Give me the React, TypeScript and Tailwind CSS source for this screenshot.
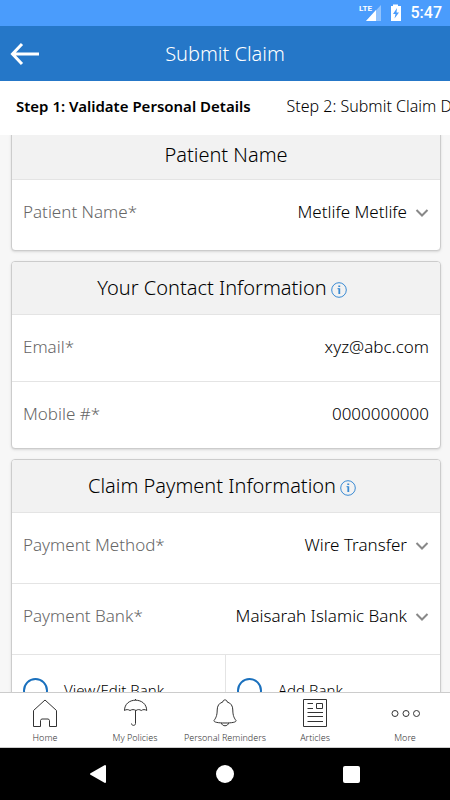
import React, { useState } from 'react';

const navItems = [
  { label: 'Home', icon: <HomeIcon /> },
  { label: 'My Policies', icon: <UmbrellaIcon /> },
  { label: 'Personal Reminders', icon: <BellIcon /> },
  { label: 'Articles', icon: <ArticleIcon /> },
  { label: 'More', icon: <MoreIcon /> },
];

function HomeIcon() {
  return (
    <svg width="30" height="30" viewBox="0 0 30 30" fill="none" stroke="#333" strokeWidth="1">
      <path d="M3.5 28.5V12.5L15 2L26.5 12.5V28.5H19.5V22.5L18.5 21H11.5L10.5 22.5V28.5Z" />
    </svg>
  );
}

function UmbrellaIcon() {
  return (
    <svg width="30" height="30" viewBox="0 0 30 30" fill="none" stroke="#333" strokeWidth="1">
      <path d="M4.5 12.5C4.5 6 9.5 2.2 15.5 2.2S26.700 6 26.700 12.500C25 11.300 23 11.300 21.300 12.500C19.500 11.300 17.700 11.300 16 12.500C14 11.300 12 11.300 10 12.500C8.200 11.300 6.200 11.300 4.500 12.500Z" />
      <path d="M15.500 1V2.200M15.500 12.500V25.500C15.500 28 11.500 28 11.500 25.500" />
    </svg>
  );
}

function BellIcon() {
  return (
    <svg width="30" height="30" viewBox="0 0 30 30" fill="none" stroke="#333" strokeWidth="1">
      <path d="M12.800 4C12.800 1.200 17.200 1.200 17.200 4C21 5 22.800 8 22.800 12C22.800 18 24.500 20.500 26 22.500C26.500 24 23 25 15 25S3.500 24 4 22.500C5.500 20.500 7.200 18 7.200 12C7.200 8 9 5 12.800 4Z" />
      <path d="M11.500 25C12 28.700 18 28.700 18.500 25" />
    </svg>
  );
}

function ArticleIcon() {
  return (
    <svg width="30" height="30" viewBox="0 0 30 30" fill="none" stroke="#333" strokeWidth="1">
      <path d="M3.500 1.500H26.500V28.500H3.500Z" />
      <path d="M16.500 5.500H22.500V10.500H16.500ZM7.500 5.500H13M7.500 10.500H13M7.500 14.500H23M7.500 18.500H23M7.500 23.500H23" />
    </svg>
  );
}

function MoreIcon() {
  return (
    <svg width="30" height="30" viewBox="0 0 30 30" fill="none" stroke="#333" strokeWidth="1">
      <circle cx="5" cy="15.500" r="3" />
      <circle cx="16" cy="15.500" r="3" />
      <circle cx="26.500" cy="15.500" r="3" />
    </svg>
  );
}

function InfoButton({ label }: { label: string }) {
  return (
    <button type="button" aria-label={label} className="mt-1">
      <svg width="16" height="16" viewBox="0 0 16 16" fill="none" stroke="#3a8ad3">
        <circle cx="8" cy="8" r="7.300" />
        <path d="M8.300 6.200V12" strokeWidth="1.800" />
        <path d="M6.500 6.700H8" />
        <path d="M7.300 3.500H9.200V5H7.300Z" fill="#3a8ad3" stroke="none" />
      </svg>
    </button>
  );
}

function Card({ title, info, children }: { title: string; info?: boolean; children: React.ReactNode }) {
  return (
    <section className="overflow-hidden rounded border border-[#ccc] bg-white shadow-sm">
      <div className={`box-content flex items-center justify-center gap-1 border-b border-[#e4e4e4] bg-[#f2f2f2] ${info ? 'h-[52px] pr-2' : 'h-12'
        }`}>
        <h2 className="text-xl font-[350]">{title}</h2>
        {info && <InfoButton label={`About ${title}`} />}
      </div>
      <div className="divide-y divide-[#e4e4e4]">{children}</div>
    </section>
  );
}

function SelectRow({ id, label, value }: { id: string; label: string; value: string }) {
  return (
    <div className="box-content flex h-[70px] items-center px-[11px]">
      <label htmlFor={id} className="shrink-0 pb-1.5 text-[#666]">{label}</label>
      <select id={id} className="min-w-0 flex-1 appearance-none bg-transparent pr-2 pb-1.5 text-right text-black">
        <option>{value}</option>
      </select>
      <svg width="14" height="14" viewBox="0 0 14 14" fill="none" stroke="#888" strokeWidth="2">
        <path d="M1.500 2L7 7.500L12.500 2" />
      </svg>
    </div>
  );
}

function InputRow({ id, label, type, value }: { id: string; label: string; type: string; value: string }) {
  return (
    <div className="box-content flex h-[66px] items-center px-[11px]">
      <label htmlFor={id} className="shrink-0 pb-0.5 text-[#666]">{label}</label>
      <input id={id} type={type} defaultValue={value} className="min-w-0 flex-1 bg-transparent pb-0.5 text-right text-black" />
    </div>
  );
}

export default function App() {
  const [bank, setBank] = useState('');

  return (
    <div className="flex h-screen flex-col overflow-hidden bg-[#f7f7f7] font-['Noto_Sans',sans-serif] text-[17px] font-light text-black">
      {/* Status bar */}
      <div className="flex h-[26px] shrink-0 items-center justify-end bg-[#4a9cfc] pr-2 text-white">
        <svg width="44" height="20" viewBox="0 0 44 20" fill="#fff" className="mr-2">
          <text x="0" y="8" fontSize="8" fontWeight="700" fontFamily="Roboto, sans-serif">LTE</text>
          <path d="M22 2V18H7Z" opacity="0.400" />
          <path d="M17 7V18H7Z" />
          <path d="M34 3V1.500H39V3H42V18H32V3Z" />
          <path d="M38 5L34 11H36.500L35.500 15.500L40 9.500H37.500Z" fill="#4a9cfc" />
        </svg>
        <span className="font-['Roboto',sans-serif] text-base font-medium">5:47</span>
      </div>

      {/* Header */}
      <header className="grid h-[55px] shrink-0 grid-cols-[1fr_auto_1fr] items-center bg-[#2577c8] px-[10px] text-white">
        <button type="button" aria-label="Back" className="justify-self-start">
          <svg width="30" height="24" viewBox="0 0 30 24" fill="none" stroke="#fff" strokeWidth="3">
            <path d="M12 2L2.500 12L12 22M2.500 12H29" />
          </svg>
        </button>
        <h1 className="text-xl font-[350]">Submit Claim</h1>
      </header>

      {/* Steps */}
      <nav className="flex h-[54px] shrink-0 items-center gap-9 overflow-hidden bg-white px-4 pb-1 whitespace-nowrap">
        <a href="#step-1" aria-current="step" className="text-[15px] font-semibold">Step 1: Validate Personal Details</a>
        <a href="#step-2" className="text-base">Step 2: Submit Claim Details</a>
      </nav>

      {/* Form */}
      <main className="min-h-0 flex-1 overflow-hidden pr-[9px] pl-[11px]">
        <form className="-mt-[5px] flex flex-col gap-2.5">
          <Card title="Patient Name">
            <SelectRow id="patient" label="Patient Name*" value="Metlife Metlife" />
          </Card>
          <Card title="Your Contact Information" info>
            <InputRow id="email" label="Email*" type="email" value="xyz@abc.com" />
            <InputRow id="mobile" label="Mobile #*" type="tel" value="0000000000" />
          </Card>
          <Card title="Claim Payment Information" info>
            <SelectRow id="method" label="Payment Method*" value="Wire Transfer" />
            <SelectRow id="bank" label="Payment Bank*" value="Maisarah Islamic Bank" />
            <div className="grid grid-cols-2 divide-x divide-[#e4e4e4]">
              {['View/Edit Bank', 'Add Bank'].map((option) => (
                <label key={option} className="flex h-[70px] items-center gap-4 px-[11px] text-[15px]">
                  <input
                    type="radio"
                    name="bank-action"
                    checked={bank === option}
                    onChange={() => setBank(option)}
                    className="size-[25px] appearance-none rounded-full border-2 border-[#1a70bd] checked:bg-[#1a70bd]"
                  />
                  {option}
                </label>
              ))}
            </div>
          </Card>
        </form>
      </main>

      {/* Bottom tabs */}
      <nav className="grid h-[56px] shrink-0 grid-cols-5 border-y border-[#ccc] bg-white">
        {navItems.map((item) => (
          <a key={item.label} href="#" className="flex flex-col items-center gap-[3px] pt-[5px] text-[9px] whitespace-nowrap text-[#333]">
            {item.icon}
            {item.label}
          </a>
        ))}
      </nav>

      {/* Android navigation */}
      <div className="flex h-[52px] shrink-0 items-center justify-center gap-[109px] bg-black pr-0.5">
        <button type="button" aria-label="System back">
          <svg width="18" height="20" viewBox="0 0 18 20" fill="#fff" stroke="#fff" strokeWidth="2" strokeLinejoin="round">
            <path d="M16 2V18L2 10Z" />
          </svg>
        </button>
        <button type="button" aria-label="System home" className="size-[18px] rounded-full bg-white" />
        <button type="button" aria-label="Recent apps" className="size-[17px] rounded-xs bg-white" />
      </div>
    </div>
  );
}
